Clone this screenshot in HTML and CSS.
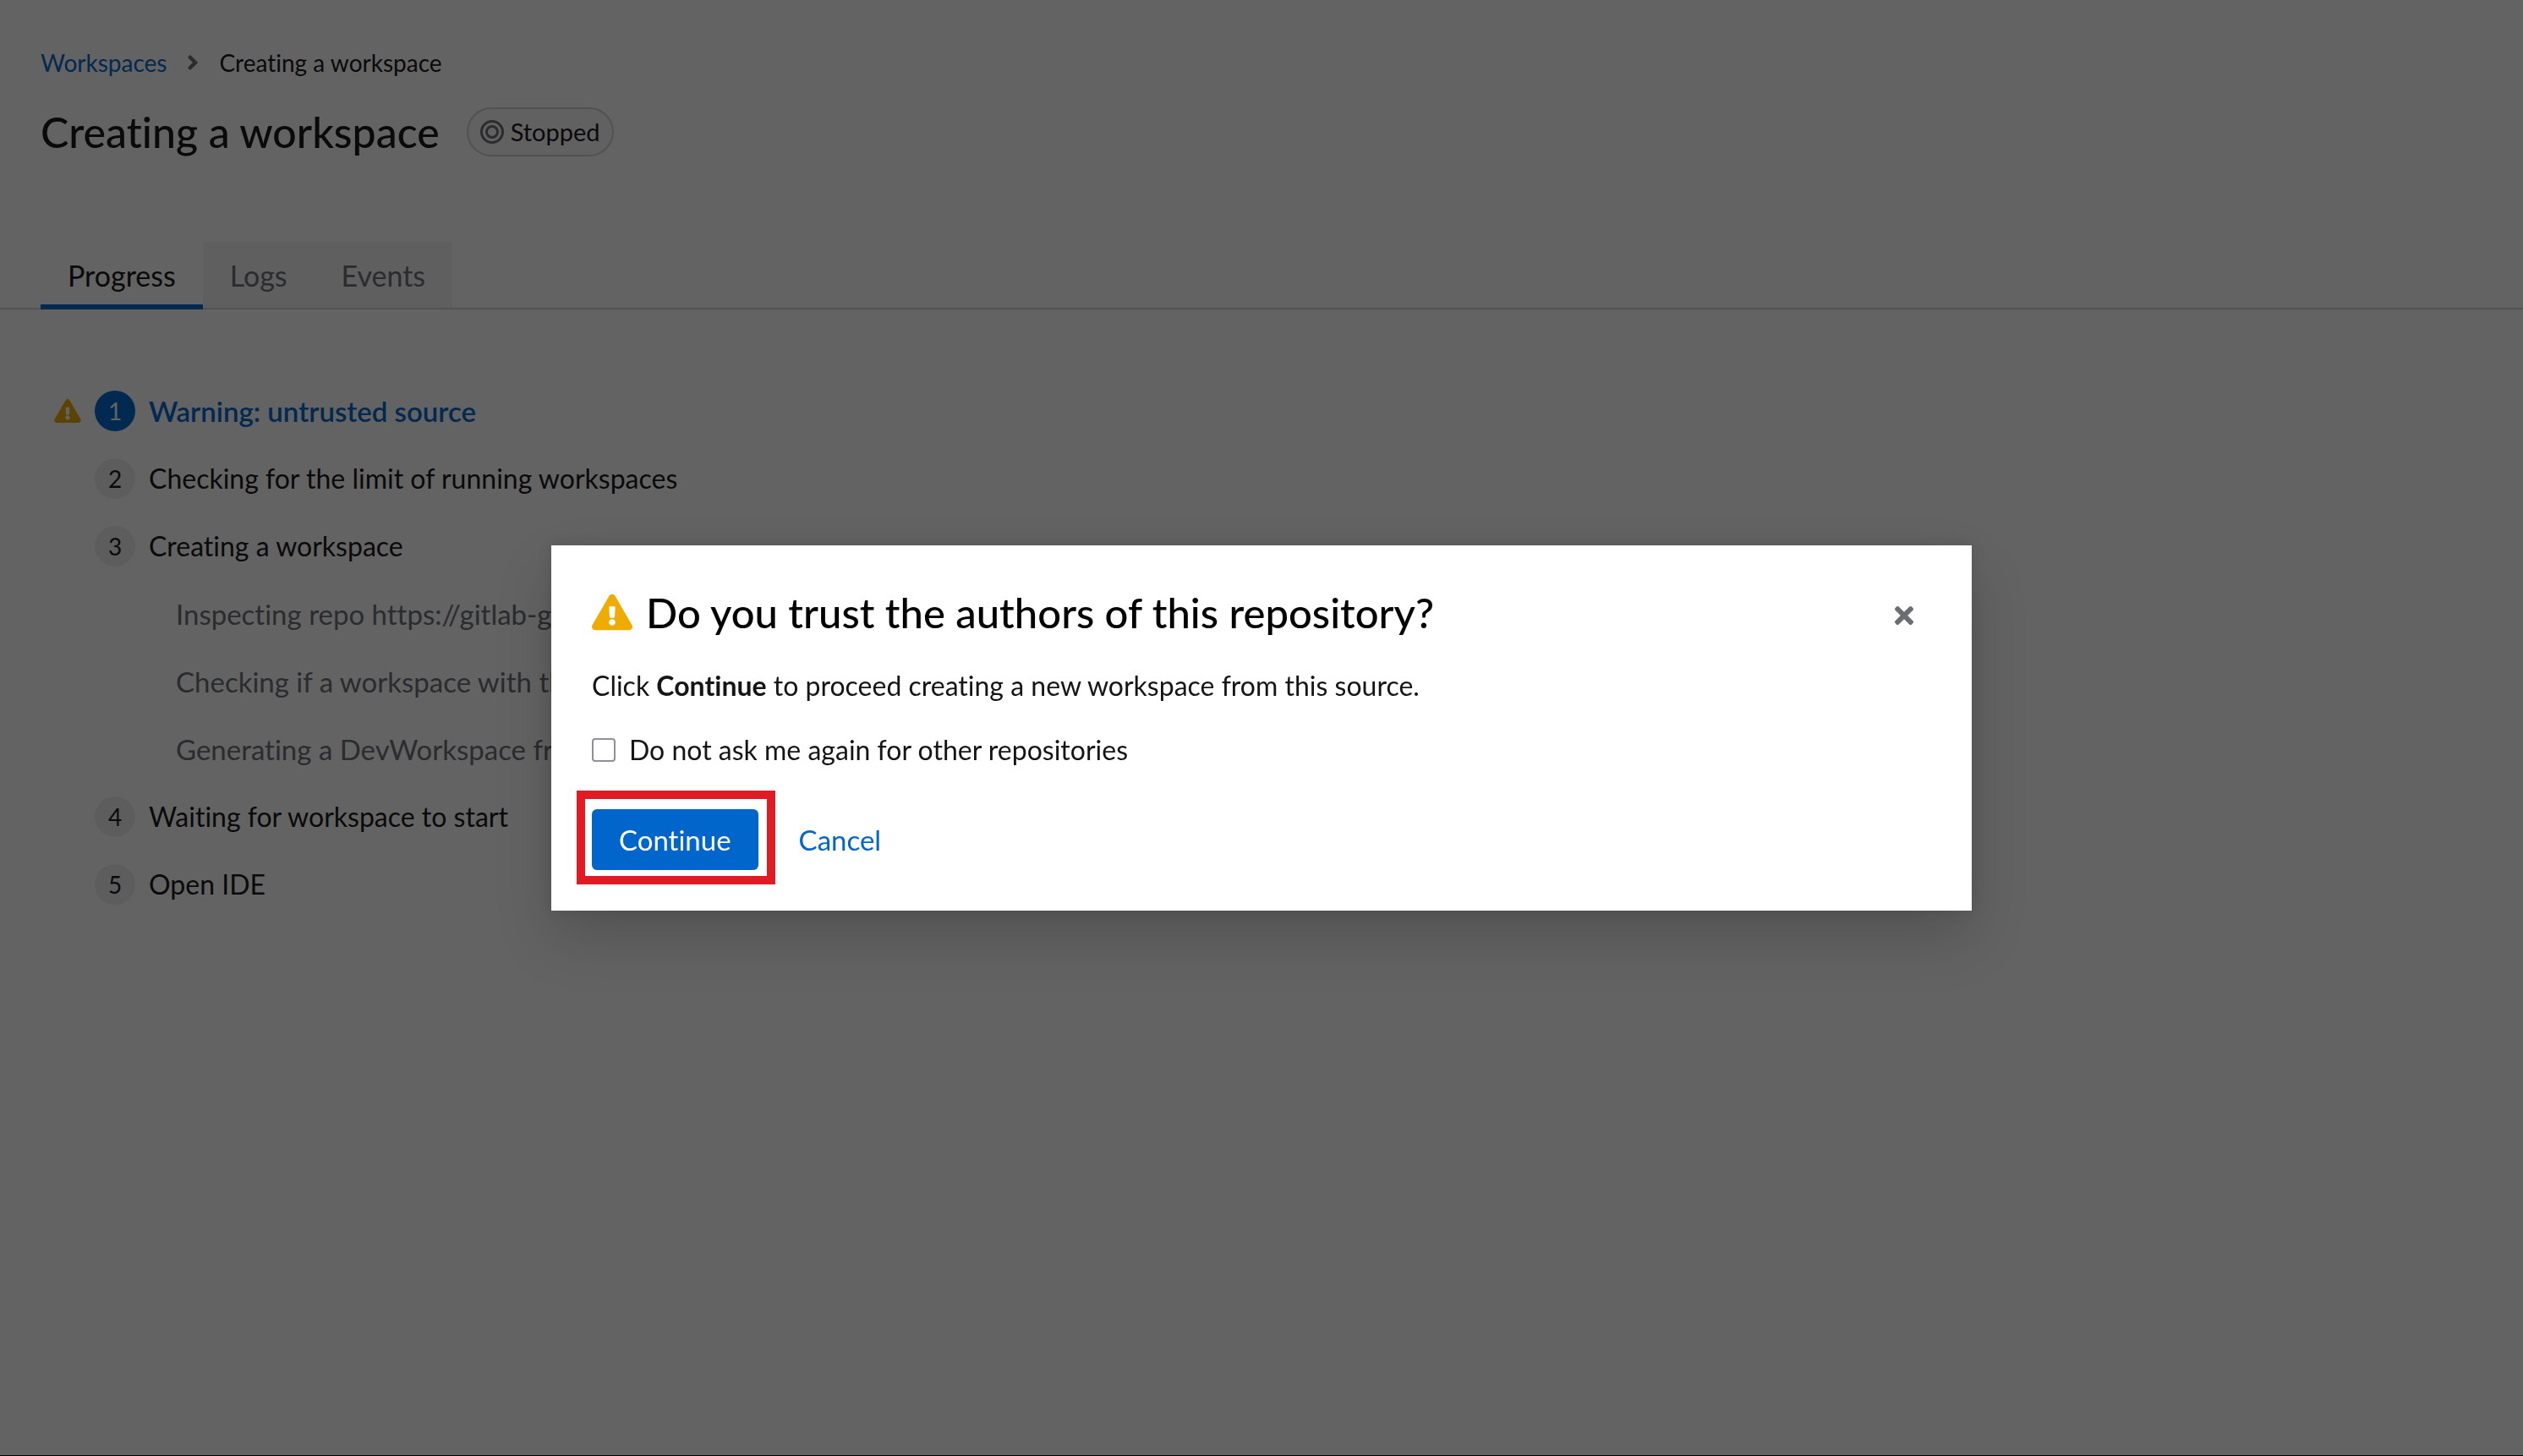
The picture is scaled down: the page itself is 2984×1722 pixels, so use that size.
FILE: index.html
```html
<!DOCTYPE html>
<html lang="en">
<head>
<meta charset="utf-8">
<title>Creating a workspace</title>
<link rel="stylesheet" href="styles.css">
</head>
<body>
<div class="page">
  <header class="header">
    <nav class="breadcrumb" aria-label="Breadcrumb">
      <a class="breadcrumb-link" href="#workspaces">Workspaces</a>
      <svg class="breadcrumb-divider" viewBox="0 0 256 512" aria-hidden="true"><path d="M224.3 273l-136 136c-9.400 9.400-24.600 9.400-33.900 0l-22.600-22.600c-9.400-9.400-9.400-24.600 0-33.900l96.400-96.400-96.400-96.400c-9.400-9.400-9.400-24.600 0-33.900L54.300 103c9.400-9.400 24.600-9.400 33.900 0l136 136c9.500 9.400 9.500 24.600.1 34z"/></svg>
      <span>Creating a workspace</span>
    </nav>
    <div class="title-row">
      <h1 class="title">Creating a workspace</h1>
      <span class="status">
        <svg class="status-icon" viewBox="0 0 28 28" aria-hidden="true"><circle cx="14" cy="14" r="12.500"/><circle cx="14" cy="14" r="6.500"/></svg>
        Stopped
      </span>
    </div>
  </header>
  <div class="tabs" role="tablist">
    <button class="tab tab-current" role="tab" aria-selected="true">Progress</button>
    <button class="tab" role="tab" aria-selected="false">Logs</button>
    <button class="tab" role="tab" aria-selected="false">Events</button>
  </div>
  <main>
    <ol class="steps">
      <li class="step step-current">
        <svg class="step-warning" viewBox="0 0 576 512" aria-hidden="true"><path d="M569.517 440.013C587.975 472.007 564.806 512 527.940 512H48.054c-36.937 0-59.999-40.055-41.577-71.987L246.423 23.985c18.467-32.009 64.720-31.951 83.154 0l239.940 416.028zM288 354c-25.405 0-46 20.595-46 46s20.595 46 46 46 46-20.595 46-46-20.595-46-46-46zm-43.673-165.346l7.418 136c.347 6.364 5.609 11.346 11.982 11.346h48.546c6.373 0 11.635-4.982 11.982-11.346l7.418-136c.375-6.874-5.098-12.654-11.982-12.654h-63.383c-6.884 0-12.356 5.780-11.981 12.654z"/></svg>
        <span class="step-number">1</span><span>Warning: untrusted source</span>
      </li>
      <li class="step"><span class="step-number">2</span><span>Checking for the limit of running workspaces</span></li>
      <li class="step"><span class="step-number">3</span><span>Creating a workspace</span></li>
      <li class="step substep">Inspecting repo https://gitlab-g</li>
      <li class="step substep">Checking if a workspace with th</li>
      <li class="step substep">Generating a DevWorkspace fro</li>
      <li class="step"><span class="step-number">4</span><span>Waiting for workspace to start</span></li>
      <li class="step"><span class="step-number">5</span><span>Open IDE</span></li>
    </ol>
  </main>
</div>
<div class="backdrop">
  <section class="modal" role="dialog" aria-modal="true" aria-labelledby="modal-title">
    <div class="modal-header">
      <svg class="modal-warning" viewBox="0 0 576 512" aria-hidden="true"><path d="M569.517 440.013C587.975 472.007 564.806 512 527.940 512H48.054c-36.937 0-59.999-40.055-41.577-71.987L246.423 23.985c18.467-32.009 64.720-31.951 83.154 0l239.940 416.028zM288 354c-25.405 0-46 20.595-46 46s20.595 46 46 46 46-20.595 46-46-20.595-46-46-46zm-43.673-165.346l7.418 136c.347 6.364 5.609 11.346 11.982 11.346h48.546c6.373 0 11.635-4.982 11.982-11.346l7.418-136c.375-6.874-5.098-12.654-11.982-12.654h-63.383c-6.884 0-12.356 5.780-11.981 12.654z"/></svg>
      <h2 class="modal-title" id="modal-title">Do you trust the authors of this repository?</h2>
      <button class="close" aria-label="Close"><svg class="close-icon" viewBox="0 0 352 352" aria-hidden="true"><path d="M242.720 176l100.070-100.070c12.280-12.280 12.280-32.190 0-44.480l-22.240-22.240c-12.280-12.280-32.190-12.280-44.480 0L176 109.280 75.930 9.210c-12.280-12.280-32.190-12.280-44.480 0L9.210 31.450c-12.280 12.280-12.280 32.190 0 44.480L109.280 176 9.210 276.070c-12.280 12.280-12.280 32.190 0 44.480l22.240 22.240c12.280 12.280 32.200 12.280 44.480 0L176 242.720l100.070 100.070c12.280 12.280 32.200 12.280 44.480 0l22.240-22.240c12.280-12.280 12.280-32.190 0-44.480L242.720 176z"/></svg></button>
    </div>
    <p class="modal-text">Click <b>Continue</b> to proceed creating a new workspace from this source.</p>
    <label class="check"><input class="check-box" type="checkbox"><span>Do not ask me again for other repositories</span></label>
    <div class="actions">
      <span class="highlight"><button class="button button-primary">Continue</button></span>
      <button class="button button-link">Cancel</button>
    </div>
  </section>
</div>
</body>
</html>
```
FILE: styles.css
```css
* { box-sizing: border-box; }
body {
  margin: 0;
  background: #fff;
  color: #151515;
  font-family: Lato, "Liberation Sans", sans-serif;
  font-size: 32px;
  line-height: 48px;
  font-variant-ligatures: none;
}
button, input { font: inherit; font-variant-ligatures: none; }
svg { flex: none; fill: currentColor; }
.page { min-height: 100vh; border-bottom: 1px solid #000; }
.header { padding: 52px 48px 0; }
.breadcrumb { display: flex; align-items: center; gap: 24px; font-size: 28px; line-height: 44px; }
.breadcrumb-link { color: #06c; text-decoration: none; }
.breadcrumb-divider { height: 28px; width: 14px; color: #6a6e73; }
.title-row { display: flex; align-items: center; gap: 32px; padding: 30px 0 100px; }
.title { margin: 0; font-size: 50px; line-height: 60px; font-weight: 500; }
.status {
  display: flex;
  align-items: center;
  gap: 8px;
  height: 58px;
  padding: 0 14px;
  border: 2px solid #d2d2d2;
  border-radius: 29px;
  background: #fafafa;
  font-size: 29px;
}
.status-icon { width: 28px; height: 28px; fill: none; stroke: #6a6e73; stroke-width: 3; }
.tabs { display: flex; padding: 0 48px; border-bottom: 2px solid #d2d2d2; }
.tab {
  height: 78px;
  padding: 2px 32px 0;
  border: 0;
  background: #f5f5f5;
  color: #6a6e73;
  font-size: 34px;
}
.tab-current { height: 80px; margin-bottom: -2px; background: none; color: #151515; border-bottom: 6px solid #06c; padding-top: 6px; }
.steps { display: flex; flex-direction: column; gap: 32px; margin: 0; padding: 96px 48px 96px 64px; list-style: none; }
.step { display: flex; align-items: center; gap: 16px; padding-left: 48px; }
.step-current { padding-left: 0; color: #06c; font-size: 33px; font-weight: 600; }
.step-warning { width: 32px; height: 28px; color: #f0ab00; }
.step-number {
  width: 48px;
  height: 48px;
  border-radius: 50%;
  background: #f0f0f0;
  font-size: 28px;
  font-weight: 400;
  text-align: center;
}
.step-current .step-number { background: #06c; color: #fff; }
.substep { padding-left: 144px; color: #6a6e73; font-size: 33px; }
.backdrop {
  position: fixed;
  inset: 0;
  display: flex;
  align-items: center;
  justify-content: center;
  background: rgba(3, 3, 3, .62);
}
.modal {
  width: 1680px;
  max-width: 90%;
  padding: 48px;
  background: #fff;
  box-shadow: 0 32px 64px rgba(3, 3, 3, .16), 0 0 16px rgba(3, 3, 3, .1);
}
.modal-header { display: flex; align-items: center; gap: 16px; margin-bottom: 32px; }
.modal-warning { width: 48px; height: 44px; color: #f0ab00; }
.modal-title { flex: 1; margin: 0; color: #000; font-size: 49px; line-height: 60px; font-weight: 500; }
.close { display: flex; padding: 24px 21px 16px; border: 0; background: none; color: #6a6e73; }
.close-icon { width: 22px; height: 22px; }
.modal-text { margin: 0 0 28px; }
.check { display: flex; align-items: center; gap: 16px; }
.check-box { appearance: none; width: 28px; height: 28px; margin: 0; border: 2px solid #8f8f9d; border-radius: 4px; background: #fff; }
.actions { display: flex; align-items: center; gap: 16px; margin-top: 46px; }
.highlight { position: relative; }
/* Callout frame around the primary action */
.highlight::after {
  content: "";
  position: absolute;
  inset: -22px -20px -17px -18px;
  border: 10px solid #e01b24;
  pointer-events: none;
}
.button { display: block; height: 72px; padding: 0 32px; border: 0; border-radius: 6px; font-size: 33px; }
.button-primary { background: #06c; color: #fff; }
.button-link { background: none; color: #06c; }
```
